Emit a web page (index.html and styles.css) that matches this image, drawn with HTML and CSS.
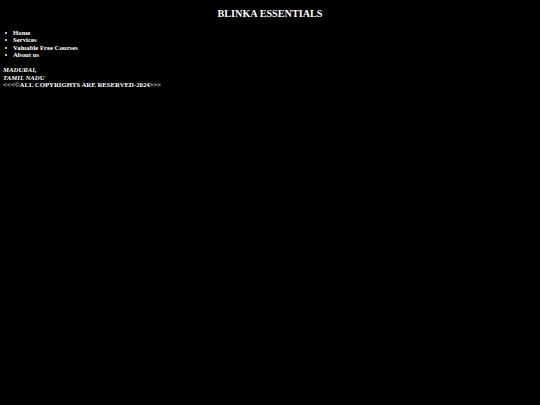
FILE: index.html
```html
<!DOCTYPE html>
<html>
<head>
<meta charset="utf-8">
<link rel="stylesheet" href="styles.css">
</head>
<body>
<h1 class="title">BLINKA ESSENTIALS</h1>
<ul class="nav">
<li>Home</li>
<li>Services</li>
<li>Valuable Free Courses</li>
<li>About us</li>
</ul>
<footer class="foot">
<address class="addr">MADURAI,<br>TAMIL NADU</address>
<div class="copy">&lt;&lt;&lt;©ALL COPYRIGHTS ARE RESERVED-2024&gt;&gt;&gt;</div>
</footer>
</body>
</html>
```
FILE: styles.css
```css
html, body {
  background: #000;
}
body {
  margin: 3px;
  color: #fff;
  font-family: "Liberation Serif", "Times New Roman", serif;
  font-size: 6.75px;
  line-height: 7.5px;
  font-weight: bold;
}
.title {
  font-size: 10.2px;
  line-height: 12px;
  text-align: center;
  margin: 5px 0 8.5px;
}
.nav {
  margin: 0 0 6px;
  padding-left: 10px;
  list-style: none;
}
.nav li {
  position: relative;
}
.nav li::before {
  content: "";
  position: absolute;
  left: -8.5px;
  top: 3px;
  width: 2.2px;
  height: 2.2px;
  border-radius: 50%;
  background: #fff;
}
.foot {
  padding-top: 1.5px;
}
.addr {
  font-style: italic;
}
```
